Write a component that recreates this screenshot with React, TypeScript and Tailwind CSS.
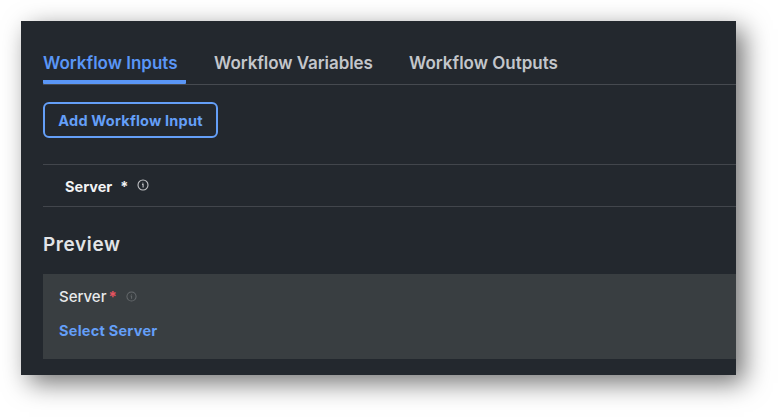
function InfoIcon({ className }: { className: string }) {
  return (
    <svg viewBox="0 0 12 12" fill="none" stroke="currentColor" className={className}>
      <circle cx="6" cy="6" r="5" strokeWidth="1.1" />
      <path d="M5 5.4H6.1V8.4" strokeWidth="1.1" />
      <circle cx="5.9" cy="3.9" r="0.5" fill="currentColor" stroke="none" />
    </svg>
  );
}

export default function App() {
  return (
    <div className="h-[417px] w-[778px] overflow-hidden bg-white pl-[21px] pt-[21px] font-['Inter',sans-serif]">
      <main className="flex h-[354px] w-[715px] flex-col bg-[#23282e] pl-[22px] shadow-[8px_8px_24px_rgba(0,0,0,0.55)]">
        <nav className="flex h-16 shrink-0 items-start gap-7 border-b border-[#464a50] text-[17px] font-semibold leading-6 text-[#c3c6cb]">
          <button className="flex h-[63px] w-[143px] items-start whitespace-nowrap rounded-b-[1px] border-b-4 border-[#5a96f6] pt-[30px] text-[#5a96f6]">
            Workflow Inputs
          </button>
          <button className="flex w-[167px] items-start whitespace-nowrap pt-[30px] tracking-[-0.06px]">
            Workflow Variables
          </button>
          <button className="flex items-start whitespace-nowrap pt-[30px]">Workflow Outputs</button>
        </nav>
        <button className="mt-[17px] flex h-9 w-[175px] shrink-0 items-center justify-center whitespace-nowrap rounded-md border-2 border-[#649ff8] pt-px text-[14.5px] font-bold tracking-[0.2px] text-[#649ff8]">
          Add Workflow Input
        </button>
        <div className="mt-[26px] flex h-[43px] shrink-0 items-center border-y border-[#42464c] pl-[22px] pt-0.5 text-[14.5px] font-bold text-[#f2f3f4]">
          <span>Server</span>
          <span className="ml-2">*</span>
          <InfoIcon className="mb-[3px] ml-[9px] size-3 text-[#c0c2c5]" />
        </div>
        <h2 className="mt-[25px] h-[42px] shrink-0 text-[19px] font-semibold leading-[26px] tracking-[0.6px] text-[#e2e4e7]">
          Preview
        </h2>
        <section className="h-[85px] shrink-0 bg-[#393e41] pl-4 pt-[13px] text-[15px]">
          <div className="flex h-5 items-center font-medium text-[#e8eaeb]">
            <span>Server</span>
            <span className="ml-[2px] font-bold text-[#e65360]">*</span>
            <InfoIcon className="mb-0.5 ml-[9px] size-[11px] text-[#65696c]" />
          </div>
          <button className="mt-3.5 block h-5 whitespace-nowrap text-[14.5px] font-bold leading-5 tracking-[0.25px] text-[#649ff8]">
            Select Server
          </button>
        </section>
      </main>
    </div>
  );
}
